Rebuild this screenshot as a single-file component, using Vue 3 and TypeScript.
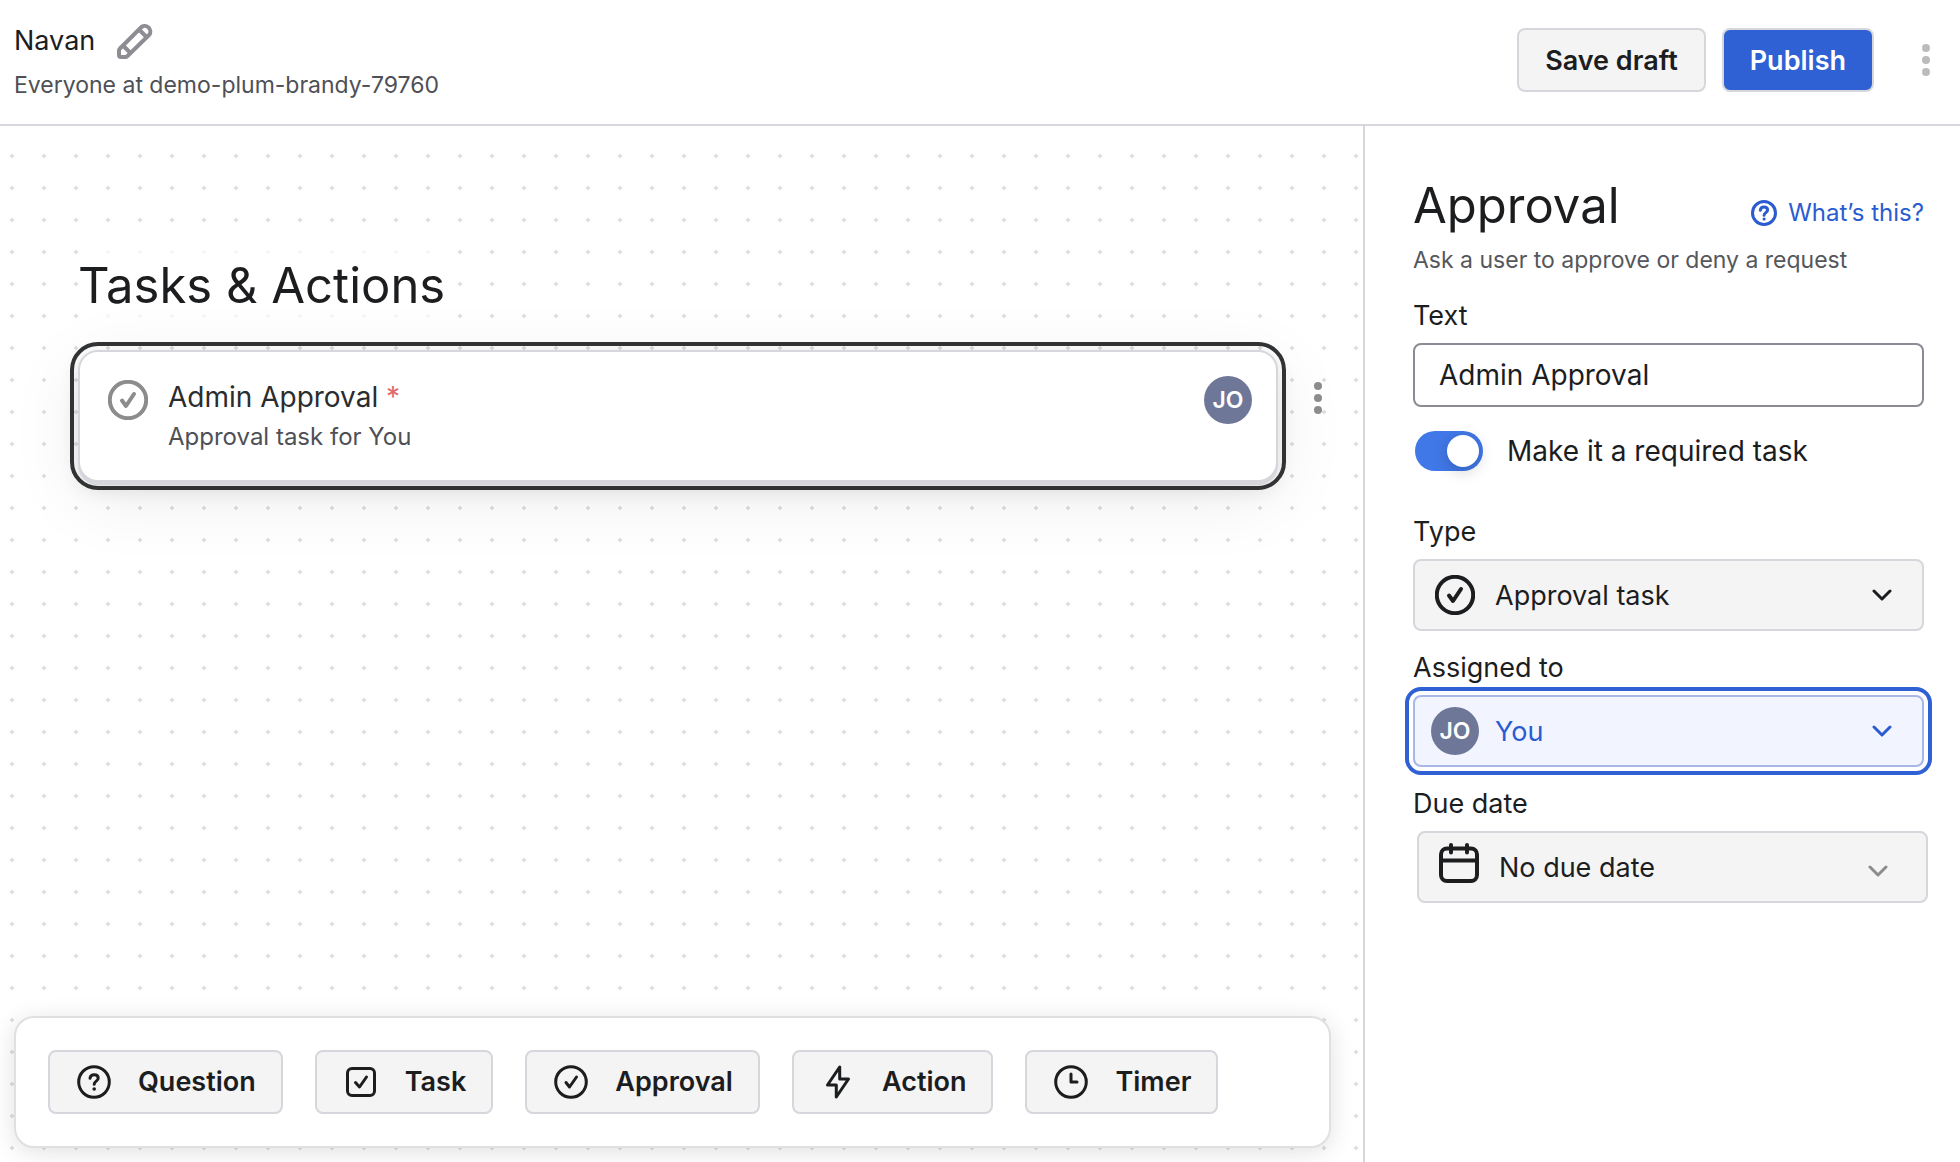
<script setup lang="ts">
import { ref } from 'vue'

type IconName = 'question' | 'task' | 'approval' | 'action' | 'timer'

interface AddItem {
  label: string
  icon: IconName
}

const addItems: AddItem[] = [
  { label: 'Question', icon: 'question' },
  { label: 'Task', icon: 'task' },
  { label: 'Approval', icon: 'approval' },
  { label: 'Action', icon: 'action' },
  { label: 'Timer', icon: 'timer' },
]

const taskText = ref('Admin Approval')
const required = ref(true)
const taskType = ref('Approval task')
const assignee = ref('You')
const dueDate = ref('No due date')
</script>

<template>
  <div class="page">
    <header class="topbar">
      <div class="identity">
        <div class="name-row">
          <span class="name">Navan</span>
          <button class="icon-button" type="button" aria-label="Rename">
            <svg class="pencil" viewBox="0 0 36 36" aria-hidden="true">
              <path d="M2 32V27.500Q2 26.500 3 25.500L24.500 4A5.600 5.600 0 0 1 32.300 11.800L10.500 33Q9.500 34 8.500 34H4Q2 34 2 32Z" />
              <path d="M22.500 7 29 13.500M6.500 23 13 29.500" />
            </svg>
          </button>
        </div>
        <div class="audience">Everyone at demo-plum-brandy-79760</div>
      </div>
      <div class="actions">
        <button class="button" type="button">Save draft</button>
        <button class="button primary" type="button">Publish</button>
        <button class="icon-button more" type="button" aria-label="More options">
          <svg class="kebab" viewBox="0 0 8 32" aria-hidden="true">
            <circle cx="4" cy="4" r="4" /><circle cx="4" cy="16" r="4" /><circle cx="4" cy="28" r="4" />
          </svg>
        </button>
      </div>
    </header>

    <div class="body">
      <main class="canvas">
        <h2 class="canvas-title">Tasks &amp; Actions</h2>
        <div class="task-row">
          <article class="card">
            <svg class="card-icon" viewBox="0 0 40 40" aria-hidden="true">
              <circle cx="20" cy="20" r="18.200" />
              <path d="M14 20.500 18 26 26 14" />
            </svg>
            <div class="card-text">
              <div class="card-title">{{ taskText }} <span v-if="required" class="star">*</span></div>
              <div class="card-sub">Approval task for {{ assignee }}</div>
            </div>
            <span class="avatar">JO</span>
          </article>
          <button class="icon-button card-more" type="button" aria-label="Task options">
            <svg class="kebab" viewBox="0 0 8 32" aria-hidden="true">
              <circle cx="4" cy="4" r="4" /><circle cx="4" cy="16" r="4" /><circle cx="4" cy="28" r="4" />
            </svg>
          </button>
        </div>

        <div class="toolbar">
          <button v-for="item in addItems" :key="item.label" class="button add" type="button">
            <svg class="add-icon" viewBox="0 0 40 40" aria-hidden="true">
              <template v-if="item.icon === 'question'">
                <circle cx="20" cy="20" r="15.300" />
                <path d="M16 16.200c.4-2.400 2-3.400 4.200-3.400 2.400 0 4 1.300 4 3.400 0 2.900-4 2.900-4 6" />
                <circle class="dot" cx="20.200" cy="27" r="1.800" />
              </template>
              <template v-else-if="item.icon === 'task'">
                <rect x="6.500" y="6.500" width="27" height="27" rx="4.500" />
                <path d="M14.500 20.500 18.500 25 25.500 15" />
              </template>
              <template v-else-if="item.icon === 'approval'">
                <circle cx="20" cy="20" r="15.300" />
                <path d="M15 20.500 18.500 25 25.500 15" />
              </template>
              <template v-else-if="item.icon === 'action'">
                <path d="M21.700 5V17H30.500L18.300 35V23H9.500Z" />
              </template>
              <template v-else>
                <circle cx="20" cy="20" r="15.300" />
                <path d="M20 12V20H26" />
              </template>
            </svg>
            <span>{{ item.label }}</span>
          </button>
        </div>
      </main>

      <aside class="panel">
        <div class="panel-head">
          <h1 class="panel-title">Approval</h1>
          <a class="help" href="#">
            <svg class="help-icon" viewBox="0 0 26 26" aria-hidden="true">
              <circle cx="13" cy="13" r="11.500" />
              <path d="M9.300 10.200c.3-2.100 1.700-3.100 3.700-3.100 2.200 0 3.600 1.200 3.600 3 0 2.500-3.500 2.500-3.500 5.200" />
              <circle class="dot" cx="13.100" cy="19" r="1.600" />
            </svg>
            What’s this?
          </a>
        </div>
        <p class="panel-sub">Ask a user to approve or deny a request</p>

        <label class="field-label" for="task-text">Text</label>
        <input id="task-text" v-model="taskText" class="text-input" type="text" />

        <label class="toggle">
          <input v-model="required" type="checkbox" role="switch" />
          <span>Make it a required task</span>
        </label>

        <label class="field-label" for="task-type">Type</label>
        <div class="picker">
          <select id="task-type" v-model="taskType">
            <option>Approval task</option>
            <option>Question</option>
          </select>
          <svg class="lead" viewBox="0 0 40 40" aria-hidden="true">
            <circle cx="20" cy="20" r="18.200" />
            <path d="M14 20.500 18 26 26 14" />
          </svg>
          <svg class="chevron" viewBox="0 0 20 12" aria-hidden="true"><path d="M2 2 10 10 18 2" /></svg>
        </div>

        <label class="field-label" for="task-assignee">Assigned to</label>
        <div class="picker focused">
          <select id="task-assignee" v-model="assignee">
            <option>You</option>
            <option>Anyone</option>
          </select>
          <span class="avatar lead-avatar">JO</span>
          <svg class="chevron" viewBox="0 0 20 12" aria-hidden="true"><path d="M2 2 10 10 18 2" /></svg>
        </div>

        <label class="field-label" for="task-due">Due date</label>
        <div class="picker due">
          <select id="task-due" v-model="dueDate">
            <option>No due date</option>
            <option>Tomorrow</option>
          </select>
          <svg class="lead" viewBox="0 0 40 40" aria-hidden="true">
            <rect x="2" y="5.500" width="36" height="32.500" rx="6" />
            <path d="M2 17.500H38M12 2V9.500M28 2V9.500" />
          </svg>
          <svg class="chevron" viewBox="0 0 20 12" aria-hidden="true"><path d="M2 2 10 10 18 2" /></svg>
        </div>
      </aside>
    </div>
  </div>
</template>

<style>
body {
  margin: 0;
  background: #fff;
}
</style>

<style scoped>
* {
  box-sizing: border-box;
}

.page {
  display: flex;
  flex-direction: column;
  min-height: 100vh;
  font-family: Inter, "Liberation Sans", sans-serif;
  font-size: 27px;
  line-height: 40px;
  color: #1c1d1f;
}

button,
input,
select {
  font: inherit;
  color: inherit;
}

svg {
  display: block;
  flex: none;
  fill: none;
  stroke: currentColor;
  stroke-linecap: round;
  stroke-linejoin: round;
}

.dot {
  fill: currentColor;
  stroke: none;
}

.topbar {
  display: flex;
  align-items: center;
  justify-content: space-between;
  height: 126px;
  padding: 0 30px 4px 14px;
  border-bottom: 2px solid #d6d6dc;
}

.identity {
  padding-top: 5px;
}

.name-row {
  display: flex;
  align-items: center;
  gap: 22px;
  height: 44px;
}

.icon-button {
  padding: 0;
  border: 0;
  background: none;
  cursor: pointer;
}

.pencil {
  width: 36px;
  height: 36px;
  stroke-width: 4;
  color: #8d8d94;
}

.audience {
  font-size: 23px;
  line-height: 44px;
  color: #4e5056;
}

.actions {
  display: flex;
  align-items: center;
  gap: 16px;
}

.button {
  height: 64px;
  padding: 1px 26px 0;
  border: 2px solid #d6d6dc;
  border-radius: 8px;
  background: #f4f4f4;
  font-weight: 600;
  white-space: nowrap;
  cursor: pointer;
}

.primary {
  background: #2f61d5;
  color: #fff;
}

.kebab {
  width: 8px;
  height: 32px;
  fill: currentColor;
  stroke: none;
}

.more {
  margin-left: 32px;
  color: #bbb;
}

.body {
  display: flex;
  flex: 1;
}

.canvas {
  display: flex;
  flex: 1;
  flex-direction: column;
  align-items: flex-start;
  min-width: 0;
  padding: 124px 32px 14px 14px;
  background: radial-gradient(circle at center, #e0e0e0 2px, transparent 2px) -4px 14px / 32px 32px;
}

.canvas-title {
  margin: 0 0 28px 64px;
  background: linear-gradient(rgba(255, 255, 255, 0.75) 12px, #fff 16px, #fff 56px, rgba(255, 255, 255, 0.75) 60px);
  font-size: 49px;
  font-weight: 400;
  line-height: 72px;
}

.task-row {
  display: flex;
  gap: 36px;
  align-self: stretch;
  padding-left: 64px;
  padding-right: 9px;
}

.card {
  display: flex;
  flex: 1;
  align-items: flex-start;
  height: 132px;
  padding: 24px 24px 0 28px;
  border: 2px solid #d6d6dc;
  border-radius: 20px;
  outline: 4px solid #313234;
  outline-offset: 4px;
  background: #fff;
  box-shadow: 0 3px 0 #d6d6dc, 0 8px 20px rgba(0, 0, 0, 0.1), 0 16px 72px rgba(0, 0, 0, 0.08);
}

.card-icon {
  width: 40px;
  height: 40px;
  margin-top: 4px;
  stroke-width: 4;
  color: #8c8c8c;
}

.card-text {
  flex: 1;
  margin-left: 20px;
  padding-top: 1px;
}

.card-title {
  font-size: 28px;
  color: #2b2c2e;
}

.star {
  color: #e26a6a;
}

.card-sub {
  font-size: 24px;
  color: #4e5056;
}

.avatar {
  display: flex;
  flex: none;
  align-items: center;
  justify-content: center;
  width: 48px;
  height: 48px;
  border-radius: 50%;
  background: #6e7797;
  color: #fff;
  font-size: 23px;
  font-weight: 600;
}

.card-more {
  align-self: flex-start;
  margin-top: 32px;
  color: #8c8c8c;
}

.toolbar {
  display: flex;
  align-self: stretch;
  gap: 32px;
  margin-top: auto;
  padding: 32px;
  border: 2px solid #e0e0e0;
  border-radius: 20px;
  background: #fff;
  box-shadow: 0 4px 24px rgba(0, 0, 0, 0.12);
}

.add {
  display: flex;
  align-items: center;
  gap: 24px;
  padding: 0 25px 0 24px;
}

.add-icon {
  width: 40px;
  height: 40px;
  stroke-width: 3;
}

.panel {
  flex: 0 0 597px;
  padding: 48px 36px 0 48px;
  border-left: 2px solid #d6d6dc;
}

.panel-head {
  display: flex;
  align-items: center;
  justify-content: space-between;
}

.panel-title {
  margin: 0;
  font-size: 49px;
  font-weight: 400;
  line-height: 64px;
}

.help {
  display: flex;
  align-items: center;
  gap: 11px;
  padding-top: 14px;
  font-size: 24px;
  color: #2b5bd0;
  text-decoration: none;
}

.help-icon {
  width: 26px;
  height: 26px;
  stroke-width: 3;
}

.panel-sub {
  margin: 0;
  font-size: 23px;
  line-height: 44px;
  color: #55575c;
}

.field-label {
  display: block;
  padding: 17px 0 7px;
}

.panel-sub + .field-label {
  padding-top: 14px;
}

.text-input {
  width: 100%;
  height: 64px;
  padding: 0 24px;
  border: 2px solid #8a8b93;
  border-radius: 8px;
  background: #fff;
  font-size: 28px;
}

.toggle {
  display: flex;
  align-items: center;
  gap: 24px;
  margin: 24px 0 24px 2px;
  font-size: 28px;
}

.toggle input {
  display: flex;
  width: 68px;
  height: 40px;
  margin: 0;
  padding: 4px;
  border-radius: 20px;
  background: #c4c5ca;
  appearance: none;
}

.toggle input:checked {
  justify-content: flex-end;
  background: #4178e8;
}

.toggle input::before {
  width: 32px;
  height: 32px;
  border-radius: 50%;
  background: #fff;
  box-shadow: 0 4px 16px rgba(0, 0, 0, 0.2);
  content: "";
}

.picker {
  display: grid;
  grid-template-columns: 20px 48px 1fr 20px 32px;
  align-items: center;
}

.picker select {
  grid-area: 1 / 1 / 2 / -1;
  width: 100%;
  height: 72px;
  padding: 2px 64px 0 80px;
  border: 2px solid #d6d6dc;
  border-radius: 8px;
  background: #f4f4f4;
  appearance: none;
}

.lead {
  grid-area: 1 / 2;
  justify-self: start;
  width: 40px;
  height: 40px;
  margin-left: 2px;
  stroke-width: 4;
  pointer-events: none;
}

.lead-avatar {
  grid-area: 1 / 2;
  margin-left: -2px;
  pointer-events: none;
}

.chevron {
  grid-area: 1 / 4;
  width: 20px;
  height: 12px;
  stroke-width: 3;
  pointer-events: none;
}

.focused {
  color: #2b5bd0;
}

.focused select {
  border-color: #a9b6ea;
  outline: 4px solid #2f61d5;
  outline-offset: 4px;
  background: #f2f5ff;
}

.due {
  margin: 0 -4px 0 4px;
}

.due .lead {
  margin-bottom: 8px;
}

.due .chevron {
  margin: 8px 8px 0 -8px;
  color: #8c8c8c;
}
</style>
